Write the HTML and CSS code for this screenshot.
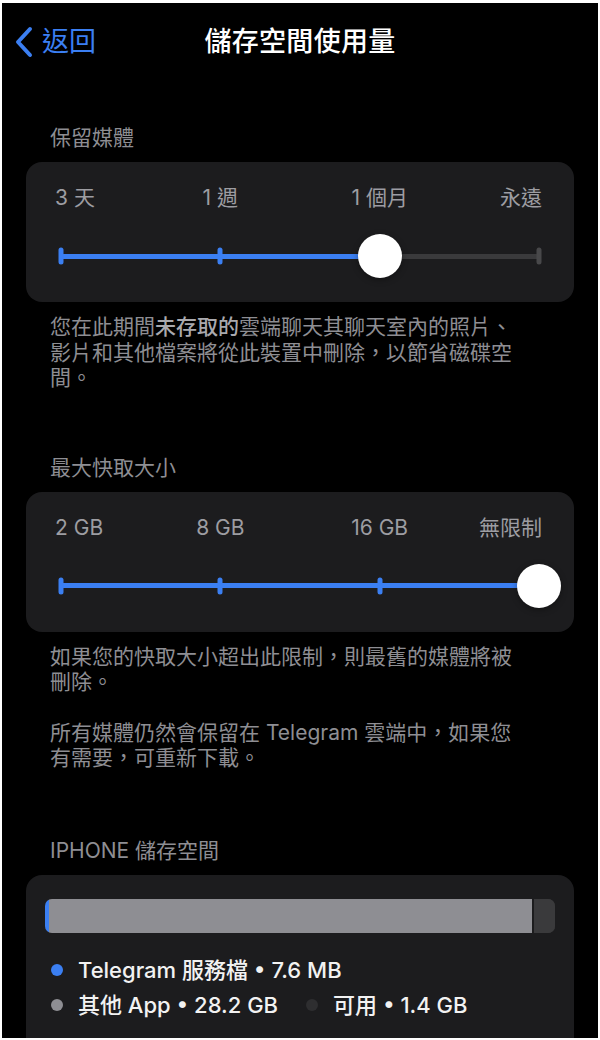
FILE: index.html
```html
<!DOCTYPE html>
<html lang="zh-Hant">
<head>
<meta charset="utf-8">
<title>儲存空間使用量</title>
<link rel="stylesheet" href="styles.css">
</head>
<body>
<div class="phone">
  <header class="nav">
    <a class="back" href="#">
      <svg class="chev" width="20" height="32" viewBox="0 0 20 32"><polyline points="16,3 4,16 16,29" fill="none" stroke="currentColor" stroke-width="4" stroke-linecap="round" stroke-linejoin="round"/></svg>
      <span>返回</span>
    </a>
    <h1 class="title">儲存空間使用量</h1>
    <span class="nav-spacer"></span>
  </header>

  <main class="content">
    <section class="group">
      <div class="group-label">保留媒體</div>
      <div class="card slider-card">
        <div class="labels">
          <span class="lbl first">3 天</span>
          <span class="lbl mid">1 週</span>
          <span class="lbl mid">1 個月</span>
          <span class="lbl last">永遠</span>
        </div>
        <div class="slider">
          <div class="track"><div class="fill" style="width:66.667%"></div></div>
          <span class="tick on" style="left:0%"></span>
          <span class="tick on" style="left:33.333%"></span>
          <span class="tick on" style="left:66.667%"></span>
          <span class="tick" style="left:100%"></span>
          <span class="thumb" style="left:66.667%"></span>
        </div>
      </div>
      <p class="footer">您在此期間<strong>未存取的</strong>雲端聊天其聊天室內的照片、影片和其他檔案將從此裝置中刪除，以節省磁碟空間。</p>
    </section>

    <section class="group">
      <div class="group-label">最大快取大小</div>
      <div class="card slider-card">
        <div class="labels">
          <span class="lbl first">2 GB</span>
          <span class="lbl mid">8 GB</span>
          <span class="lbl mid">16 GB</span>
          <span class="lbl last">無限制</span>
        </div>
        <div class="slider">
          <div class="track"><div class="fill" style="width:100%"></div></div>
          <span class="tick on" style="left:0%"></span>
          <span class="tick on" style="left:33.333%"></span>
          <span class="tick on" style="left:66.667%"></span>
          <span class="tick on" style="left:100%"></span>
          <span class="thumb" style="left:100%"></span>
        </div>
      </div>
      <p class="footer">如果您的快取大小超出此限制，則最舊的媒體將被刪除。</p>
      <p class="footer second">所有媒體仍然會保留在 Telegram 雲端中，如果您有需要，可重新下載。</p>
    </section>

    <section class="group">
      <div class="group-label">IPHONE 儲存空間</div>
      <div class="card storage-card">
        <div class="bar">
          <span class="seg seg-tg"></span>
          <span class="seg seg-other"></span>
          <span class="seg seg-free" style="width:21px"></span>
        </div>
        <ul class="legend">
          <li class="row">
            <span class="item"><span class="dot dot-tg"></span>Telegram 服務檔 • 7.6 MB</span>
          </li>
          <li class="row">
            <span class="item"><span class="dot dot-other"></span>其他 App • 28.2 GB</span>
            <span class="item"><span class="dot dot-free"></span>可用 • 1.4 GB</span>
          </li>
        </ul>
      </div>
    </section>
  </main>
</div>
</body>
</html>
```

FILE: styles.css
```css
html, body {
  margin: 0;
  padding: 0;
  background: #ffffff;
}

body {
  font-family: "Inter", "Noto Sans CJK TC", sans-serif;
  -webkit-font-smoothing: antialiased;
}

.phone {
  margin: 3px 2px 2px 2px;
  height: 1035px;
  background: #000000;
  overflow: hidden;
}

/* ---------- nav ---------- */
.nav {
  display: grid;
  grid-template-columns: 1fr auto 1fr;
  align-items: center;
  height: 54px;
  padding-top: 12px;
}

.back {
  display: flex;
  align-items: center;
  gap: 8px;
  padding-left: 12px;
  color: #3b7ff2;
  text-decoration: none;
  font-size: 27px;
  line-height: 32px;
}

.chev {
  display: block;
}

.title {
  margin: 0;
  color: #ffffff;
  font-size: 27px;
  font-weight: 500;
  line-height: 32px;
  letter-spacing: 0.3px;
}

/* ---------- content ---------- */
.content {
  padding: 0 24px;
}

.group {
  padding-top: 65px;
}

.group:first-child {
  padding-top: 57px;
}

.group:last-child {
  padding-top: 68px;
}

.group-label {
  padding-left: 24px;
  color: #8e8e93;
  font-size: 21px;
  line-height: 24px;
  margin-bottom: 12px;
}

.card {
  background: #1c1c1e;
  border-radius: 16px;
}

.slider-card {
  height: 140px;
  box-sizing: border-box;
  padding: 24px 35px 0 35px;
}

.labels {
  display: grid;
  grid-template-columns: repeat(6, 1fr);
  color: #9d9da2;
  font-size: 21px;
  line-height: 24px;
}

.lbl {
  white-space: nowrap;
}

.lbl.first {
  grid-column: 1;
  justify-self: start;
  margin-left: -6px;
}

.lbl.mid:nth-child(2) {
  grid-column: 2 / span 2;
  justify-self: center;
}

.lbl.mid:nth-child(3) {
  grid-column: 4 / span 2;
  justify-self: center;
}

.lbl.last {
  grid-column: 6;
  justify-self: end;
  margin-right: -3px;
}

.slider {
  position: relative;
  height: 44px;
  margin-top: 24px;
  display: flex;
  align-items: center;
}

.track {
  flex: 1;
  height: 5px;
  border-radius: 3px;
  background: #3a3a3c;
  overflow: hidden;
}

.fill {
  height: 100%;
  background: #3b7ff2;
}

.tick {
  position: absolute;
  top: 50%;
  width: 5px;
  height: 17px;
  border-radius: 3px;
  background: #48484a;
  transform: translate(-50%, -50%);
}

.tick.on {
  background: #3b7ff2;
}

.thumb {
  position: absolute;
  top: 50%;
  width: 44px;
  height: 44px;
  border-radius: 50%;
  background: #ffffff;
  box-shadow: 0 2px 6px rgba(0, 0, 0, 0.35);
  transform: translate(-50%, -50%);
}

.footer {
  margin: 12px 0 0 0;
  padding-left: 24px;
  width: 476px;
  color: #8e8e93;
  font-size: 21px;
  line-height: 25.5px;
}

.footer strong {
  color: #a9a9ae;
  font-weight: 500;
}

.footer.second {
  margin-top: 25px;
}

/* ---------- storage ---------- */
.storage-card {
  padding: 24px 19px 40px 19px;
  min-height: 200px;
}

.bar {
  display: flex;
  height: 34px;
  border-radius: 7px;
  overflow: hidden;
  background: #3a3a3c;
}

.seg {
  display: block;
  height: 100%;
}

.seg-tg {
  width: 4px;
  background: #3b7ff2;
}

.seg-other {
  flex: 1;
  background: #8e8e93;
  border-right: 2px solid #1c1c1e;
}

.seg-free {
  background: #3a3a3c;
}

.legend {
  list-style: none;
  margin: 20px 0 0 0;
  padding: 0 0 0 6px;
  color: #f2f2f2;
  font-size: 22px;
  font-weight: 500;
  line-height: 35px;
}

.row {
  display: flex;
  gap: 28px;
}

.item {
  display: flex;
  align-items: center;
  white-space: nowrap;
}

.dot {
  width: 12px;
  height: 12px;
  border-radius: 50%;
  margin-right: 15px;
}

.dot-tg {
  background: #3b7ff2;
}

.dot-other {
  background: #8e8e93;
}

.dot-free {
  background: #2e2e30;
}
```
